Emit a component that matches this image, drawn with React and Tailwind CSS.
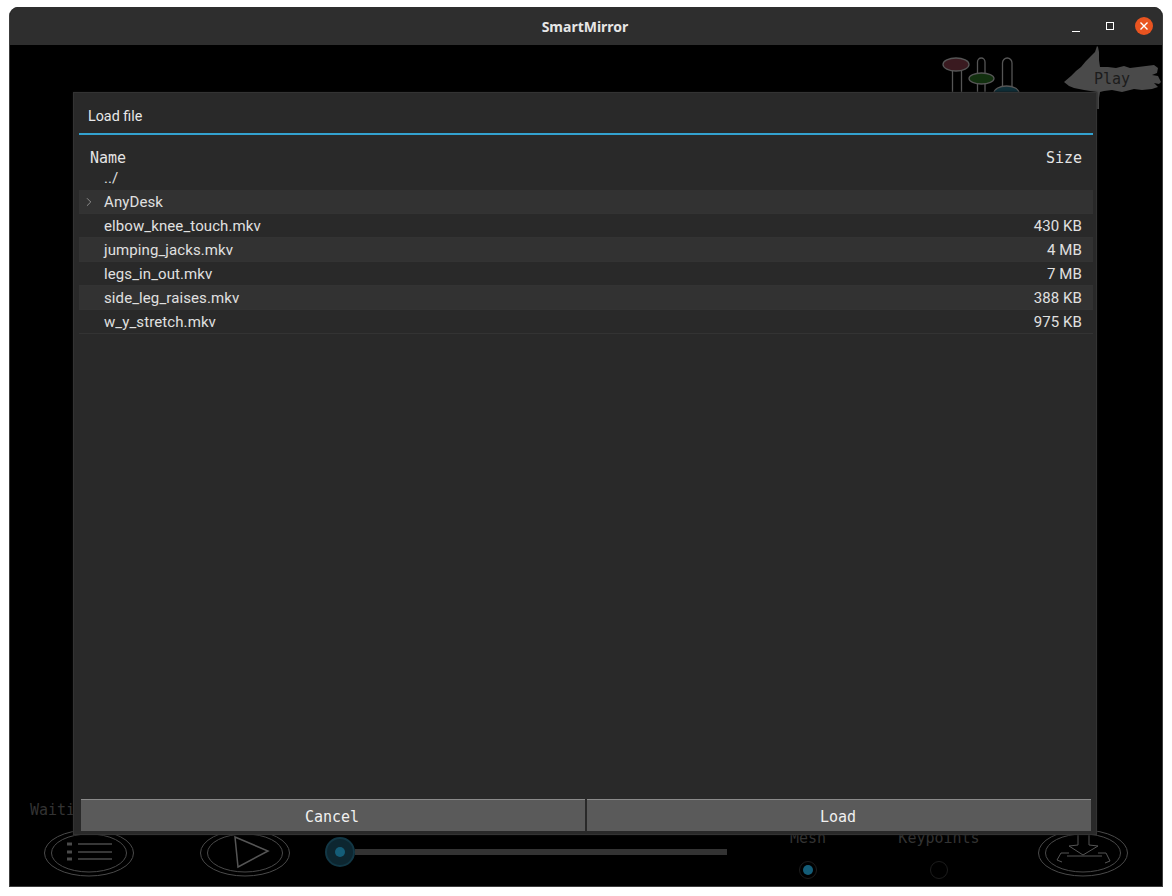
import React from "react";
import { ChevronRight } from "lucide-react";

const files = [
  { name: "../", size: "", plain: true },
  { name: "AnyDesk", size: "", folder: true },
  { name: "elbow_knee_touch.mkv", size: "430 KB" },
  { name: "jumping_jacks.mkv", size: "4 MB" },
  { name: "legs_in_out.mkv", size: "7 MB" },
  { name: "side_leg_raises.mkv", size: "388 KB" },
  { name: "w_y_stretch.mkv", size: "975 KB" },
];

const mono = "font-['DejaVu_Sans_Mono',monospace] text-[15px] leading-5";

const RoundButton = ({ children }) => (
  <svg width="90" height="50" viewBox="0 0 90 50" fill="none" stroke="#4a4a4a" className="shrink-0">
    <ellipse cx="45" cy="25" rx="44.5" ry="23" />
    <ellipse cx="45" cy="25" rx="37.5" ry="19" />
    {children}
  </svg>
);

const Sliders = () => (
  <svg width="80" height="40" viewBox="0 0 80 40" fill="none" stroke="#555" strokeWidth="1.3">
    <path d="M10.5 38V10M19.5 38V10" />
    <path d="M35.5 38V5a3.75 4 0 0 1 7.5 0V38" />
    <path d="M60.5 38V6a4.75 5 0 0 1 9.5 0V38" />
    <ellipse cx="14" cy="7.5" rx="13" ry="6.5" fill="#3a1a20" />
    <ellipse cx="39.5" cy="21.5" rx="12.5" ry="5.5" fill="#12300f" />
    <ellipse cx="64.5" cy="36" rx="12.5" ry="7" fill="#0f2f38" />
  </svg>
);

const PlayArrow = () => (
  <div className="relative h-[66px] w-[98px] shrink-0">
    <svg width="98" height="66" viewBox="0 0 98 66" className="absolute inset-0">
      <path
        fill="#4a4a4a"
        d="M0 36L7 30L12 25L17 21L22 15L27 10L31 6L33 0L34 1L35 6L35 14L36 21L44 21L52 22L60 20L66 22L74 21L82 20L90 19L94 22L93 27L88 29L94 30L97 36L95 38L90 37L94 41L88 43L78 44L70 43L58 46L48 44L40 45L36 46L35 52L35 63L33 63L32 46L20 44L10 42L5 40Z"
      />
    </svg>
    <span className={`absolute left-[30px] top-[23px] ${mono} text-[#1c1c1c]`}>Play</span>
  </div>
);

export default function App() {
  return (
    <div className="h-[896px] w-[1172px] overflow-hidden bg-white pl-[9px] pt-[7px] font-['Roboto',sans-serif]">
      <div className="relative flex h-[880px] w-[1154px] flex-col overflow-hidden rounded-t-[9px] border-x border-b border-[#3c3c3c] bg-black">
        <header className="relative flex h-[38px] shrink-0 items-center justify-center bg-[#2e2e2e]">
          <span className="-ml-[2px] font-['Noto_Sans',sans-serif] text-[14px] font-bold text-[#e6e6e6]">SmartMirror</span>
          <div className="absolute right-[9px] top-[10px] flex items-center">
            <span className="mr-[26px] mt-[10px] h-px w-[8px] bg-white" />
            <span className="mr-[21px] h-[8px] w-[8px] border border-white" />
            <span className="flex h-[18px] w-[18px] items-center justify-center rounded-full bg-[#e95420]">
              <svg width="8" height="8" viewBox="0 0 8 8" stroke="white" strokeWidth="1.4">
                <path d="M0.5 0.5l7 7M7.5 0.5l-7 7" />
              </svg>
            </span>
          </div>
        </header>

        <main className="relative flex flex-1 flex-col justify-between">
          <div className="flex items-start justify-end pt-[1px]">
            <div className="mr-[42px] mt-[11px]"><Sliders /></div>
            <PlayArrow />
          </div>

          <div className="flex flex-col">
            <p className={`pl-[20px] ${mono} text-[#333]`}>Waiting</p>
            <div className="flex h-[66px] items-start pl-[34px] pt-[8px]">
              <RoundButton>
                <g stroke="#4a4a4a" strokeWidth="1.5">
                  <path d="M34 16h34M34 24h34M34 31h34" />
                  <path d="M23 16h5M23 24h5M23 31h5" strokeWidth="3" />
                </g>
              </RoundButton>
              <div className="ml-[66px] shrink-0">
                <RoundButton>
                  <path d="M35 9l33 14-30 16z" stroke="#555" strokeWidth="1.5" />
                </RoundButton>
              </div>
              <div className="ml-[35px] mt-[9px] flex w-[402px] shrink-0 items-center">
                <span className="flex h-[30px] w-[30px] shrink-0 items-center justify-center rounded-full border-2 border-[#123745] bg-[#0d2630]">
                  <span className="h-[10px] w-[10px] rounded-full bg-[#145d78]" />
                </span>
                <span className="h-[6px] flex-1 bg-[#333]" />
              </div>
              <div className="ml-[61px] flex w-[40px] shrink-0 flex-col items-center">
                <span className={`${mono} text-[#333]`}>Mesh</span>
                <span className="mt-[13px] flex h-[18px] w-[18px] items-center justify-center rounded-full border border-[#1c1c1c]">
                  <span className="h-[10px] w-[10px] rounded-full bg-[#145d78]" />
                </span>
              </div>
              <div className="ml-[71px] flex w-[80px] shrink-0 flex-col items-center">
                <span className={`${mono} text-[#333]`}>Keypoints</span>
                <span className="mt-[13px] h-[18px] w-[18px] rounded-full border border-[#1c1c1c]" />
              </div>
              <div className="ml-[59px] shrink-0">
                <RoundButton>
                  <path d="M40 5V17L31 18L45 27L60 18L51 17V5M31 25H23L19 32L24 34M29 28H64M60 25H68L72 33L67 35" stroke="#555" />
                </RoundButton>
              </div>
            </div>
          </div>

          {/* modal */}
          <section className="absolute left-[63px] top-[47px] flex h-[743px] w-[1024px] flex-col border border-[#333] bg-[#292929] pb-[3px] pl-[5px] pr-[3px] shadow-[0_0_2px_#111]">
            <div className="flex h-[42px] shrink-0 items-center border-b-2 border-[#33a2d0] pl-[9px] pt-[8px] text-[14.3px] text-[#e8e8e8]">
              Load file
            </div>

            <div className="flex flex-1 flex-col pt-[13px]">
              <div className={`flex h-5 items-center justify-between px-[11px] ${mono} text-[#e4e4e4]`}>
                <span>Name</span>
                <span>Size</span>
              </div>
              {files.map((f, i) => (
                <div
                  key={f.name}
                  className={`flex items-center pr-[11px] text-[15px] tracking-[0.1px] text-[#e0e0e0] ${f.plain ? "h-[22px] pb-[2px]" : "h-6 border-b border-[#333] pt-[1px]"} ${i % 2 === 1 ? "bg-[#323232]" : ""}`}
                >
                  <span className="flex w-[25px] shrink-0 justify-center pr-[5px]">
                    {f.folder && <ChevronRight size={14} strokeWidth={1} className="text-[#ccc]" />}
                  </span>
                  <span className="flex-1">{f.name}</span>
                  <span>{f.size}</span>
                </div>
              ))}
            </div>

            <div className="flex h-[32px] shrink-0 gap-[2px] px-[2px]">
              {["Cancel", "Load"].map((label) => (
                <button
                  key={label}
                  className={`flex-1 border-t border-[#8a8a8a] bg-[#5a5a5a] pr-[2px] pt-[3px] ${mono} text-[#f0f0f0]`}
                >
                  {label}
                </button>
              ))}
            </div>
          </section>
        </main>
      </div>
    </div>
  );
}
